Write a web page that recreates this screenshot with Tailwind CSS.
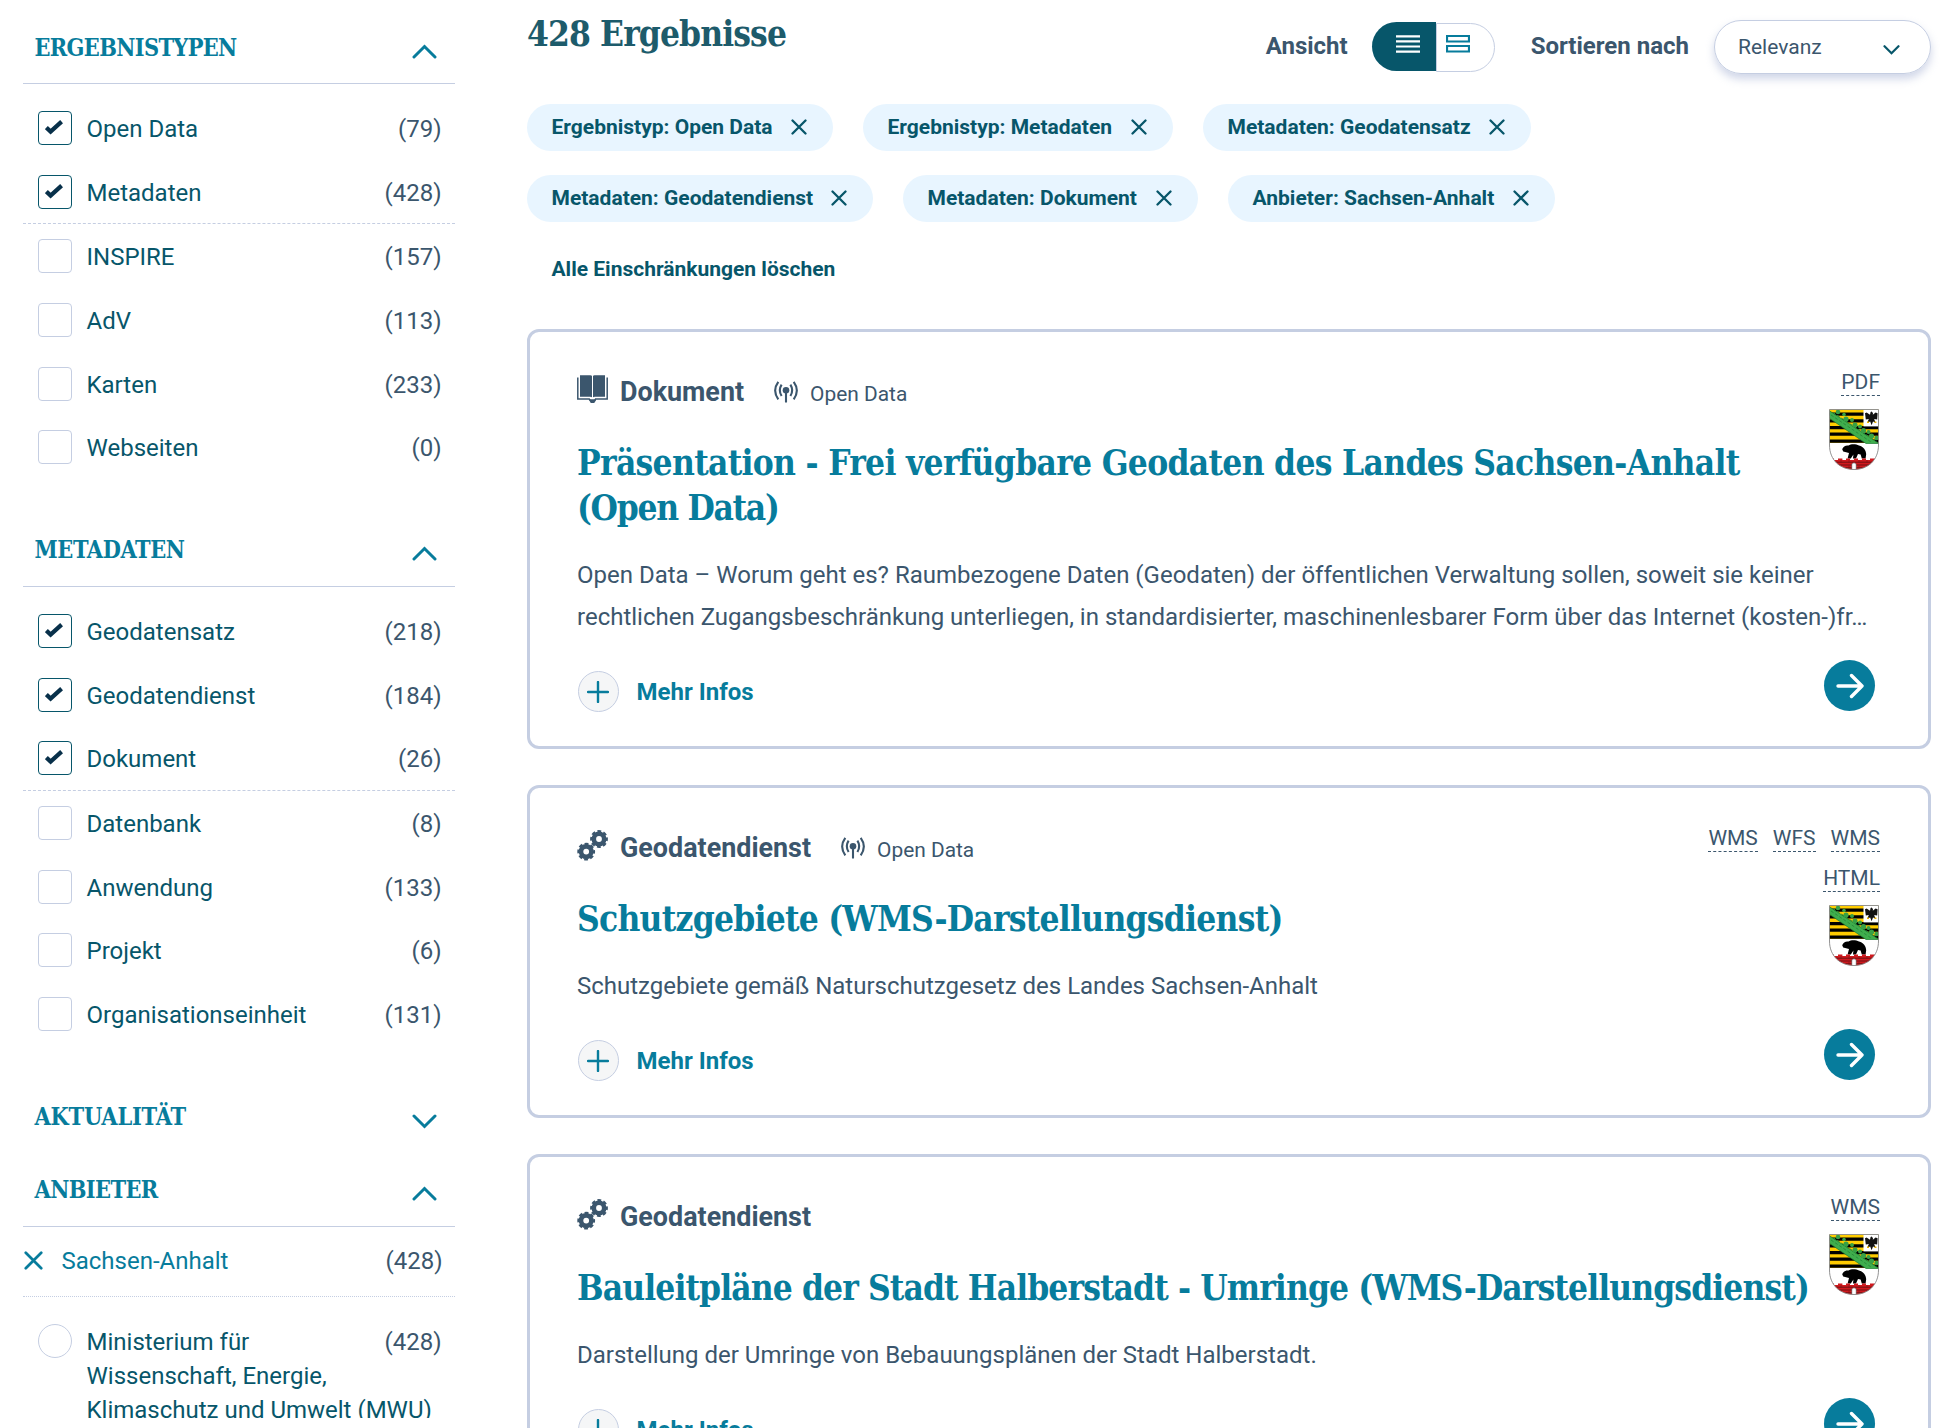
<!DOCTYPE html>
<html lang="de">
<head>
<meta charset="utf-8">
<title>428 Ergebnisse</title>
<script src="https://cdn.jsdelivr.net/npm/@tailwindcss/browser@4"></script>
</head>
<body class="bg-white font-['Roboto',sans-serif] text-[24px] text-[#3b566d]">
<svg class="absolute size-0">
  <symbol id="up" viewBox="0 0 25 15"><path d="M2 13 12.5 2.5 23 13" fill="none" stroke="#077c9c" stroke-width="3" stroke-linecap="round" stroke-linejoin="miter"/></symbol>
  <symbol id="down" viewBox="0 0 25 15"><path d="M2 2 12.5 12.5 23 2" fill="none" stroke="#077c9c" stroke-width="3" stroke-linecap="round" stroke-linejoin="miter"/></symbol>
  <symbol id="check" viewBox="0 0 18 16"><path d="M1.4 8.6 5.6 12.6 16.6 2.6" fill="none" stroke="#08304a" stroke-width="4.2"/></symbol>
  <symbol id="x" viewBox="0 0 16 16"><path d="M1.5 1.5 14.5 14.5M14.5 1.5 1.5 14.5" fill="none" stroke="currentColor" stroke-width="2.3" stroke-linecap="round"/></symbol>
  <symbol id="book" viewBox="0 0 31 30">
    <path d="M3 1.2H13.2Q15 1.4 15 2.2V23.3Q14.4 22.8 13 22.8H3ZM28 1.2H17.6Q16 1.4 16 2.2V23.3Q16.5 22.8 18 22.8H28Z" fill="#3b566d"/>
    <path d="M.8 3.5V25H12.2Q13 27.6 15.5 27.6 18 27.6 18.6 25H30.2V3.5" fill="none" stroke="#3b566d" stroke-width="1.5"/>
    <path d="M12.6 25.3H18.4L17.4 29H13.6Z" fill="#3b566d"/>
  </symbol>
  <symbol id="gears" viewBox="0 0 31 31">
    <g fill="none" stroke="#3b566d">
      <circle cx="22" cy="9" r="5.2" stroke-width="4.6"/><circle cx="22" cy="9" r="7.6" stroke-width="2.6" stroke-dasharray="3.7 2.27" stroke-dashoffset="1.8"/>
      <circle cx="9.2" cy="21.6" r="5.2" stroke-width="4.6"/><circle cx="9.2" cy="21.6" r="7.6" stroke-width="2.6" stroke-dasharray="3.7 2.27" stroke-dashoffset="1.8"/>
    </g>
  </symbol>
  <symbol id="antenna" viewBox="0 0 24 22">
    <circle cx="12" cy="9.3" r="3.3" fill="#3b566d"/>
    <g fill="none" stroke="#3b566d" stroke-width="2.1"><path d="M12 10V21.5"/><path d="M7.6 3.6Q4 9.3 7.6 15M16.4 3.6Q20 9.3 16.4 15"/><path d="M4.3.8Q-2 9.5 4.3 18.4M19.7.8Q26 9.5 19.7 18.4"/></g>
  </symbol>
  <symbol id="plus" viewBox="0 0 22 22"><path d="M11 1V21M1 11H21" fill="none" stroke="#077c9c" stroke-width="2.4" stroke-linecap="round"/></symbol>
  <symbol id="arrow" viewBox="0 0 28 26"><path d="M2 13H26M15.5 2.5 26 13 15.5 23.5" fill="none" stroke="#fff" stroke-width="3.4" stroke-linecap="round" stroke-linejoin="round"/></symbol>
  <clipPath id="shield"><path d="M.5.5H49.5V36C49.5 51 39 60.5 25 60.5S.5 51 .5 36Z"/></clipPath>
  <symbol id="coat" viewBox="0 0 50 61">
    <g clip-path="url(#shield)">
      <rect width="50" height="61" fill="#fff"/>
      <rect width="50" height="34" fill="#fc0"/>
      <path d="M0 5.2H50M0 11.8H50M0 18.6H50M0 25.2H50M0 32.2H50" stroke="#000" stroke-width="3.2"/>
      <path d="M0 1.5 50 34.5H37L0 9Z" fill="#3fae4d" stroke="#1c7a30" stroke-width=".7"/>
      <path d="M2 6 42 33M4 3.5 46 31.5" stroke="#2a8c3c" stroke-width="1" stroke-dasharray="3 2" fill="none"/>
      <g fill="#37a045"><circle cx="9" cy="3" r="2.3"/><circle cx="15" cy="5.5" r="1.8"/><circle cx="17" cy="10" r="2.6"/><circle cx="23" cy="11" r="2"/><circle cx="26" cy="16" r="2.6"/><circle cx="31" cy="17.6" r="2"/><circle cx="34.5" cy="21.5" r="2.6"/><circle cx="39.5" cy="23" r="2"/><circle cx="42.5" cy="27" r="2.6"/><circle cx="47.5" cy="29" r="2.2"/></g>
      <rect x="34.5" y="0" width="16" height="17.4" fill="#fff"/>
      <path d="M36 4.2 37.6 3.4 41 5.8 41.6 3 42.8 2.4 44 4.2 43.8 5.8 46.6 3.4 48.6 4.2 48.2 10.4 45.2 10 46.4 13.4 44 12.6 42.6 16.2 41.2 12.6 38.4 13.6 39.8 10 36.8 10.6Z" fill="#111"/>
      <path d="M38 13.2H40M45.4 13.2H47.4" stroke="#e8b000" stroke-width="1.6"/>
      <path d="M13.2 40.2C14 37.6 17 36 19.5 36.6 22 34.6 27 35 30 36.4 34.5 37.6 37 41 37.2 45L36.6 49.5H32.8L31.6 45.6 29 45 27 49.5H24L24.4 45.5 21.8 49.5H18.6L20 44 14.2 42.6Z" fill="#000"/>
      <path d="M0 49.5H5V51H9V49.5H13.4V51H17V49.5H21V51H25V49.5H29V51H33V49.5H37V51H41V49.5H50V61H0Z" fill="#d0191e"/>
      <path d="M0 53.2H50M0 56H50M0 58.8H50" stroke="#5a1012" stroke-width=".8"/>
      <path d="M4 51V61M12 51V61M20 51V61M30 51V61M38 51V61M46 51V61" stroke="#7a1416" stroke-width=".6" stroke-dasharray="2.6 3"/>
      <path d="M22.8 61V55Q25 52.6 27.2 55V61Z" fill="#fff" stroke="#444" stroke-width=".5"/>
    </g>
    <path d="M.5.5H49.5V36C49.5 51 39 60.5 25 60.5S.5 51 .5 36Z" fill="none" stroke="#888" stroke-width=".9"/>
  </symbol>
</svg>

<div class="flex h-[1428px] w-[1956px] overflow-hidden">
  <!-- Filter sidebar -->
  <aside class="ml-[23px] flex h-[1418px] w-[432px] flex-none flex-col overflow-hidden pt-[11px] text-[#07566a]">
    <section class="mb-[35px]">
      <header class="flex h-[73px] items-center justify-between border-b border-[#c5cee2] pr-[18px] pl-[11.5px]">
        <h2 class="pt-[2px] font-['DejaVu_Serif_Condensed',serif] text-[23.3px] font-bold tracking-[-0.65px] text-[#077c9c]">ERGEBNISTYPEN</h2>
        <svg class="mt-[8px] h-[15px] w-[25px]"><use href="#up"/></svg>
      </header>
      <ul class="pt-[12.4px]">
        <li class="flex h-[63.6px] items-center pt-[2px] pr-[13.5px] pl-[15px]"><span class="-mt-[2px] mr-[14.5px] flex size-[34px] items-center justify-center rounded border border-[#07566a]"><svg class="-ml-0.5 -mt-0.5 h-4 w-[18px]"><use href="#check"/></svg></span>Open Data<span class="ml-auto text-[#3b566d]">(79)</span></li>
        <li class="flex h-[64.2px] items-center border-b border-dashed border-[#c5cee2] pt-[2px] pr-[13.5px] pl-[15px]"><span class="-mt-[2px] mr-[14.5px] flex size-[34px] items-center justify-center rounded border border-[#07566a]"><svg class="-ml-0.5 -mt-0.5 h-4 w-[18px]"><use href="#check"/></svg></span>Metadaten<span class="ml-auto text-[#3b566d]">(428)</span></li>
        <li class="flex h-[64px] items-center pt-[2px] pr-[13.5px] pl-[15px]"><span class="-mt-[2px] mr-[14.5px] size-[34px] rounded border border-[#c5cee2]"></span>INSPIRE<span class="ml-auto text-[#3b566d]">(157)</span></li>
        <li class="flex h-[63.6px] items-center pt-[2px] pr-[13.5px] pl-[15px]"><span class="-mt-[2px] mr-[14.5px] size-[34px] rounded border border-[#c5cee2]"></span>AdV<span class="ml-auto text-[#3b566d]">(113)</span></li>
        <li class="flex h-[63.6px] items-center pt-[2px] pr-[13.5px] pl-[15px]"><span class="-mt-[2px] mr-[14.5px] size-[34px] rounded border border-[#c5cee2]"></span>Karten<span class="ml-auto text-[#3b566d]">(233)</span></li>
        <li class="flex h-[63.6px] items-center pt-[2px] pr-[13.5px] pl-[15px]"><span class="-mt-[2px] mr-[14.5px] size-[34px] rounded border border-[#c5cee2]"></span>Webseiten<span class="ml-auto text-[#3b566d]">(0)</span></li>
      </ul>
    </section>
    <section class="mb-[35px]">
      <header class="flex h-[73px] items-center justify-between border-b border-[#c5cee2] pr-[18px] pl-[11.5px]">
        <h2 class="pt-[2px] font-['DejaVu_Serif_Condensed',serif] text-[23.3px] font-bold tracking-[-0.4px] text-[#077c9c]">METADATEN</h2>
        <svg class="mt-[8px] h-[15px] w-[25px]"><use href="#up"/></svg>
      </header>
      <ul class="pt-[12.4px]">
        <li class="flex h-[63.6px] items-center pt-[2px] pr-[13.5px] pl-[15px]"><span class="-mt-[2px] mr-[14.5px] flex size-[34px] items-center justify-center rounded border border-[#07566a]"><svg class="-ml-0.5 -mt-0.5 h-4 w-[18px]"><use href="#check"/></svg></span>Geodatensatz<span class="ml-auto text-[#3b566d]">(218)</span></li>
        <li class="flex h-[63.6px] items-center pt-[2px] pr-[13.5px] pl-[15px]"><span class="-mt-[2px] mr-[14.5px] flex size-[34px] items-center justify-center rounded border border-[#07566a]"><svg class="-ml-0.5 -mt-0.5 h-4 w-[18px]"><use href="#check"/></svg></span>Geodatendienst<span class="ml-auto text-[#3b566d]">(184)</span></li>
        <li class="flex h-[64.6px] items-center border-b border-dashed border-[#c5cee2] pt-[2px] pr-[13.5px] pl-[15px]"><span class="-mt-[2px] mr-[14.5px] flex size-[34px] items-center justify-center rounded border border-[#07566a]"><svg class="-ml-0.5 -mt-0.5 h-4 w-[18px]"><use href="#check"/></svg></span>Dokument<span class="ml-auto text-[#3b566d]">(26)</span></li>
        <li class="flex h-[63.6px] items-center pt-[2px] pr-[13.5px] pl-[15px]"><span class="-mt-[2px] mr-[14.5px] size-[34px] rounded border border-[#c5cee2]"></span>Datenbank<span class="ml-auto text-[#3b566d]">(8)</span></li>
        <li class="flex h-[63.6px] items-center pt-[2px] pr-[13.5px] pl-[15px]"><span class="-mt-[2px] mr-[14.5px] size-[34px] rounded border border-[#c5cee2]"></span>Anwendung<span class="ml-auto text-[#3b566d]">(133)</span></li>
        <li class="flex h-[63.6px] items-center pt-[2px] pr-[13.5px] pl-[15px]"><span class="-mt-[2px] mr-[14.5px] size-[34px] rounded border border-[#c5cee2]"></span>Projekt<span class="ml-auto text-[#3b566d]">(6)</span></li>
        <li class="flex h-[63.6px] items-center pt-[2px] pr-[13.5px] pl-[15px]"><span class="-mt-[2px] mr-[14.5px] size-[34px] rounded border border-[#c5cee2]"></span>Organisationseinheit<span class="ml-auto text-[#3b566d]">(131)</span></li>
      </ul>
    </section>
    <header class="flex h-[73px] flex-none items-center justify-between pr-[18px] pl-[11.5px]">
      <h2 class="font-['DejaVu_Serif_Condensed',serif] text-[23.3px] font-bold tracking-[-0.2px] text-[#077c9c]">AKTUALITÄT</h2>
      <svg class="mt-[8px] h-[15px] w-[25px]"><use href="#down"/></svg>
    </header>
    <header class="flex h-[73px] flex-none items-center justify-between border-b border-[#c5cee2] pr-[18px] pl-[11.5px]">
      <h2 class="pt-[2px] font-['DejaVu_Serif_Condensed',serif] text-[23.3px] font-bold tracking-[-0.6px] text-[#077c9c]">ANBIETER</h2>
      <svg class="mt-[8px] h-[15px] w-[25px]"><use href="#up"/></svg>
    </header>
    <div class="flex h-[70px] flex-none items-center border-b border-dotted border-[#c5cee2] pr-[12.5px] pl-px text-[#077c9c]"><svg class="-mt-[2px] mr-[18.5px] size-[19px]"><use href="#x"/></svg>Sachsen-Anhalt<span class="ml-auto text-[#3b566d]">(428)</span></div>
    <div class="flex flex-none items-start pt-[28px] pr-[13.5px] pl-[15px] leading-[34.2px]"><span class="-mt-[1px] mr-[14.5px] size-[34px] flex-none rounded-full border border-[#c5cee2]"></span><span class="w-0 flex-auto whitespace-nowrap">Ministerium für<br>Wissenschaft, Energie,<br>Klimaschutz und Umwelt (MWU)</span><span class="text-[#3b566d]">(428)</span></div>
  </aside>

  <!-- Results -->
  <main class="ml-[72px] w-[1404px] flex-none">
    <div class="flex h-[104px] items-start">
      <h1 class="mt-[11px] font-['DejaVu_Serif_Condensed',serif] text-[35px] leading-[45px] font-bold tracking-[-0.9px] text-[#1d5b6b]">428 Ergebnisse</h1>
      <div class="ml-auto flex items-start font-bold">
        <span class="mt-[28px] mr-[24px] leading-[36px]">Ansicht</span>
        <span class="mt-[22px] flex">
          <span class="flex h-[49px] w-[64px] justify-center rounded-l-full bg-[#07566a] pt-[13px] pl-[9px]"><svg viewBox="0 0 24 18" class="h-[18px] w-6"><path d="M0 1.3H24M0 6.4H24M0 11.5H24M0 16.6H24" stroke="#fff" stroke-width="2.2"/></svg></span>
          <span class="mt-px h-[49px] w-[59px] rounded-r-full border border-[#c5cee2] pt-[11px] pl-[9px]"><svg viewBox="0 0 24 18" class="h-[18px] w-6"><path d="M1 1H23V6.5H1ZM1 11H23V16.5H1Z" fill="none" stroke="#077c9c" stroke-width="2.2"/></svg></span>
        </span>
        <span class="mt-[28px] ml-[36px] leading-[36px]">Sortieren nach</span>
        <span class="mt-[20px] ml-[25px] flex h-[54px] w-[217px] items-center justify-between rounded-full border border-[#c5cee2] pt-[2px] pr-[30px] pl-[23px] text-[21px] font-normal shadow-[0_5px_8px_rgba(150,165,205,0.45)]">Relevanz<svg viewBox="0 0 17 10" class="mt-[4px] h-[10px] w-[17px]"><path d="M1.5 1.2 8.5 8.2 15.5 1.2" fill="none" stroke="#07566a" stroke-width="2.2" stroke-linecap="round"/></svg></span>
      </div>
    </div>
    <div class="flex flex-col gap-6 text-[21px] font-bold text-[#07566a]">
      <div class="flex gap-[30px]">
        <span class="flex h-[47px] w-[306px] items-center justify-between rounded-full bg-[#e8f5ff] pt-px pr-[26px] pl-[24.5px]">Ergebnistyp: Open Data<svg class="-mt-[2px] size-4"><use href="#x"/></svg></span>
        <span class="flex h-[47px] w-[310px] items-center justify-between rounded-full bg-[#e8f5ff] pt-px pr-[26px] pl-[24.5px]">Ergebnistyp: Metadaten<svg class="-mt-[2px] size-4"><use href="#x"/></svg></span>
        <span class="flex h-[47px] w-[328px] items-center justify-between rounded-full bg-[#e8f5ff] pt-px pr-[26px] pl-[24.5px]">Metadaten: Geodatensatz<svg class="-mt-[2px] size-4"><use href="#x"/></svg></span>
      </div>
      <div class="flex gap-[30px]">
        <span class="flex h-[47px] w-[346px] items-center justify-between rounded-full bg-[#e8f5ff] pt-px pr-[26px] pl-[24.5px]">Metadaten: Geodatendienst<svg class="-mt-[2px] size-4"><use href="#x"/></svg></span>
        <span class="flex h-[47px] w-[295px] items-center justify-between rounded-full bg-[#e8f5ff] pt-px pr-[26px] pl-[24.5px]">Metadaten: Dokument<svg class="-mt-[2px] size-4"><use href="#x"/></svg></span>
        <span class="flex h-[47px] w-[327px] items-center justify-between rounded-full bg-[#e8f5ff] pt-px pr-[26px] pl-[24.5px]">Anbieter: Sachsen-Anhalt<svg class="-mt-[2px] size-4"><use href="#x"/></svg></span>
      </div>
      <span class="flex h-[47px] items-center pt-px pl-[24.5px]">Alle Einschränkungen löschen</span>
    </div>

    <div class="mt-[36px] flex flex-col gap-9">
      <article class="h-[420px] rounded-[12px] border-[3px] border-[#c5cee2] pt-[36px] pr-12 pl-[47px]">
        <div class="flex items-start justify-between">
          <div class="pt-[6px] whitespace-nowrap">
            <div class="flex h-9 items-center"><svg class="-mt-[7px] mr-[12px] h-[30px] w-[31px]"><use href="#book"/></svg><span class="text-[26.9px] font-bold">Dokument</span><svg class="ml-[30px] h-[22px] w-6"><use href="#antenna"/></svg><span class="ml-[12px] pt-[5px] text-[20.9px]">Open Data</span></div>
            <h3 class="mt-[30px] font-['DejaVu_Serif_Condensed',serif] text-[35px] leading-[45px] font-bold tracking-[-0.7px] text-[#077c9c]">Präsentation - Frei verfügbare Geodaten des Landes Sachsen-Anhalt<br><span class="tracking-[-1.3px]">(Open Data)</span></h3>
          </div>
          <div class="flex h-0 flex-col items-end gap-[13px]">
            <div class="flex h-7 text-[21px] leading-[27px]"><span class="border-b border-dashed border-[#3b566d] pt-px">PDF</span></div>
            <svg class="mr-px h-[61px] w-[50px] flex-none"><use href="#coat"/></svg>
          </div>
        </div>
        <p class="mt-[24px] leading-[42px] whitespace-nowrap">Open Data – Worum geht es? Raumbezogene Daten (Geodaten) der öffentlichen Verwaltung sollen, soweit sie keiner<br>rechtlichen Zugangsbeschränkung unterliegen, in standardisierter, maschinenlesbarer Form über das Internet (kosten-)fr…</p>
        <div class="mt-[22px] flex h-[51px] items-end justify-between pr-[5px]">
          <span class="-mb-px ml-[0.5px] flex items-center gap-[18px] font-bold text-[#077c9c]"><span class="flex size-[41px] items-center justify-center rounded-full border border-[#c5cee2] bg-[#f5f6f7]"><svg class="size-[22px]"><use href="#plus"/></svg></span>Mehr Infos</span>
          <span class="flex size-[51px] items-center justify-center rounded-full bg-[#077c9c]"><svg class="h-[26px] w-7"><use href="#arrow"/></svg></span>
        </div>
      </article>

      <article class="h-[333px] rounded-[12px] border-[3px] border-[#c5cee2] pt-[36px] pr-12 pl-[47px]">
        <div class="flex items-start justify-between">
          <div class="pt-[6px] whitespace-nowrap">
            <div class="flex h-9 items-center"><svg class="-mt-[5px] mr-[12px] h-[31px] w-[31px]"><use href="#gears"/></svg><span class="text-[26.9px] font-bold">Geodatendienst</span><svg class="ml-[30px] h-[22px] w-6"><use href="#antenna"/></svg><span class="ml-[12px] pt-[5px] text-[20.9px]">Open Data</span></div>
            <h3 class="mt-[30px] font-['DejaVu_Serif_Condensed',serif] text-[35px] leading-[45px] font-bold tracking-[-0.75px] text-[#077c9c]">Schutzgebiete (WMS-Darstellungsdienst)</h3>
          </div>
          <div class="flex h-0 flex-col items-end gap-[13px]">
            <div class="flex flex-none flex-col items-end gap-3 text-[21px] leading-[27px]">
              <div class="flex h-7 gap-[15px]"><span class="border-b border-dashed border-[#3b566d] pt-px">WMS</span><span class="border-b border-dashed border-[#3b566d] pt-px">WFS</span><span class="border-b border-dashed border-[#3b566d] pt-px">WMS</span></div>
              <div class="flex h-7"><span class="border-b border-dashed border-[#3b566d] pt-px">HTML</span></div>
            </div>
            <svg class="mr-px h-[61px] w-[50px] flex-none"><use href="#coat"/></svg>
          </div>
        </div>
        <p class="mt-[24px] leading-[42px] whitespace-nowrap">Schutzgebiete gemäß Naturschutzgesetz des Landes Sachsen-Anhalt</p>
        <div class="mt-[22px] flex h-[51px] items-end justify-between pr-[5px]">
          <span class="-mb-px ml-[0.5px] flex items-center gap-[18px] font-bold text-[#077c9c]"><span class="flex size-[41px] items-center justify-center rounded-full border border-[#c5cee2] bg-[#f5f6f7]"><svg class="size-[22px]"><use href="#plus"/></svg></span>Mehr Infos</span>
          <span class="flex size-[51px] items-center justify-center rounded-full bg-[#077c9c]"><svg class="h-[26px] w-7"><use href="#arrow"/></svg></span>
        </div>
      </article>

      <article class="h-[333px] rounded-[12px] border-[3px] border-[#c5cee2] pt-[36px] pr-12 pl-[47px]">
        <div class="flex items-start justify-between">
          <div class="pt-[6px] whitespace-nowrap">
            <div class="flex h-9 items-center"><svg class="-mt-[5px] mr-[12px] h-[31px] w-[31px]"><use href="#gears"/></svg><span class="text-[26.9px] font-bold">Geodatendienst</span></div>
            <h3 class="mt-[30px] font-['DejaVu_Serif_Condensed',serif] text-[35px] leading-[45px] font-bold tracking-[-0.9px] text-[#077c9c]">Bauleitpläne der Stadt Halberstadt - Umringe (WMS-Darstellungsdienst)</h3>
          </div>
          <div class="flex h-0 flex-col items-end gap-[13px]">
            <div class="flex h-7 text-[21px] leading-[27px]"><span class="border-b border-dashed border-[#3b566d] pt-px">WMS</span></div>
            <svg class="mr-px h-[61px] w-[50px] flex-none"><use href="#coat"/></svg>
          </div>
        </div>
        <p class="mt-[24px] leading-[42px] whitespace-nowrap">Darstellung der Umringe von Bebauungsplänen der Stadt Halberstadt.</p>
        <div class="mt-[22px] flex h-[51px] items-end justify-between pr-[5px]">
          <span class="-mb-px ml-[0.5px] flex items-center gap-[18px] font-bold text-[#077c9c]"><span class="flex size-[41px] items-center justify-center rounded-full border border-[#c5cee2] bg-[#f5f6f7]"><svg class="size-[22px]"><use href="#plus"/></svg></span>Mehr Infos</span>
          <span class="flex size-[51px] items-center justify-center rounded-full bg-[#077c9c]"><svg class="h-[26px] w-7"><use href="#arrow"/></svg></span>
        </div>
      </article>
    </div>
  </main>
</div>
</body>
</html>
